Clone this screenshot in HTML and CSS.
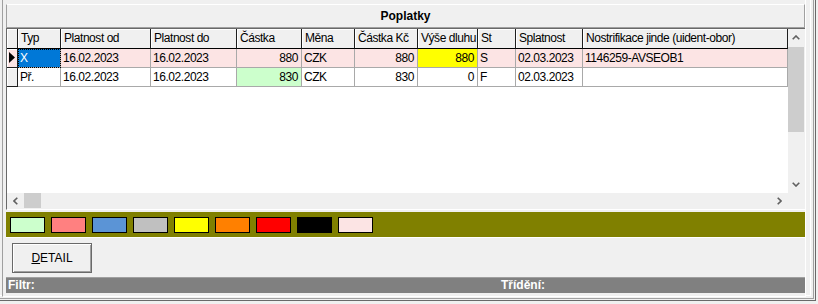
FILE: index.html
```html
<!DOCTYPE html>
<html lang="cs">
<head>
    <meta charset="UTF-8">
    <title>Poplatky</title>
    <link rel="stylesheet" href="styles.css">
</head>
<body>
    <div class="window">
        <div class="panel">
            <div class="title">Poplatky</div>

            <div class="grid">
                <div class="grid-body">
                    <div class="row head">
                        <div class="cell ind"></div>
                        <div class="cell">Typ</div>
                        <div class="cell">Platnost od</div>
                        <div class="cell">Platnost do</div>
                        <div class="cell">Částka</div>
                        <div class="cell">Měna</div>
                        <div class="cell">Částka Kč</div>
                        <div class="cell">Výše dluhu</div>
                        <div class="cell">St</div>
                        <div class="cell">Splatnost</div>
                        <div class="cell">Nostrifikace jinde (uident-obor)</div>
                    </div>
                    <div class="row data current">
                        <div class="cell ind">
                            <svg width="6" height="11" viewBox="0 0 6 11"><polygon points="0,0 6,5.5 0,11" fill="#000"/></svg>
                        </div>
                        <div class="cell sel">X</div>
                        <div class="cell">16.02.2023</div>
                        <div class="cell">16.02.2023</div>
                        <div class="cell num">880</div>
                        <div class="cell">CZK</div>
                        <div class="cell num">880</div>
                        <div class="cell num yellow">880</div>
                        <div class="cell">S</div>
                        <div class="cell">02.03.2023</div>
                        <div class="cell">1146259-AVSEOB1</div>
                    </div>
                    <div class="row data">
                        <div class="cell ind"></div>
                        <div class="cell">Př.</div>
                        <div class="cell">16.02.2023</div>
                        <div class="cell">16.02.2023</div>
                        <div class="cell num green">830</div>
                        <div class="cell">CZK</div>
                        <div class="cell num">830</div>
                        <div class="cell num">0</div>
                        <div class="cell">F</div>
                        <div class="cell">02.03.2023</div>
                        <div class="cell"></div>
                    </div>
                </div>

                <div class="vscroll">
                    <div class="arrow">
                        <svg width="8" height="5" viewBox="0 0 8 5"><path d="M0.7 4.3 L4 1 L7.3 4.3" fill="none" stroke="#606060" stroke-width="1.6"/></svg>
                    </div>
                    <div class="vtrack"><div class="vthumb"></div></div>
                    <div class="arrow">
                        <svg width="8" height="5" viewBox="0 0 8 5"><path d="M0.7 0.7 L4 4 L7.3 0.7" fill="none" stroke="#606060" stroke-width="1.6"/></svg>
                    </div>
                </div>

                <div class="hscroll">
                    <div class="harrow">
                        <svg width="5" height="8" viewBox="0 0 5 8"><path d="M4.3 0.7 L1 4 L4.3 7.3" fill="none" stroke="#606060" stroke-width="1.6"/></svg>
                    </div>
                    <div class="hthumb"></div>
                    <div class="htrack"></div>
                    <div class="harrow">
                        <svg width="5" height="8" viewBox="0 0 5 8"><path d="M0.7 0.7 L4 4 L0.7 7.3" fill="none" stroke="#606060" stroke-width="1.6"/></svg>
                    </div>
                </div>
                <div class="corner"></div>
            </div>

            <div class="legend">
                <span class="swatch c-green"></span>
                <span class="swatch c-salmon"></span>
                <span class="swatch c-blue"></span>
                <span class="swatch c-silver"></span>
                <span class="swatch c-yellow"></span>
                <span class="swatch c-orange"></span>
                <span class="swatch c-red"></span>
                <span class="swatch c-black"></span>
                <span class="swatch c-pink"></span>
            </div>

            <div class="actions">
                <button class="btn" type="button"><u>D</u>ETAIL</button>
            </div>

            <div class="status">
                <span class="status-filtr">Filtr:</span>
                <span>Třídění:</span>
            </div>
        </div>
    </div>
</body>
</html>
```

FILE: styles.css
```css
* {
    box-sizing: border-box;
}

body {
    margin: 0;
    background-color: #f0f0f0;
    font-family: "Liberation Sans", Arial, sans-serif;
    font-size: 12px;
    color: #000;
}

/* vnejsi ramecek okna */
.window {
    width: 816px;
    height: 301px;
    padding-left: 2px;
    box-shadow: inset -1px -1px 0 #696969, inset -2px -2px 0 #f0f0f0,
                inset -3px -3px 0 #a0a0a0, inset -5px -5px 0 #f0f0f0,
                inset -6px -6px 0 #fff;
}

.panel {
    width: 804px;
    height: 297px;
    padding: 4px 0 0 3px;
    background-color: #f0f0f0;
    border-left: 1px solid #a0a0a0;
    border-right: 1px solid #fff;
    border-bottom: 1px solid #fff;
    display: flex;
    flex-direction: column;
}

.title {
    height: 24px;
    border: 1px solid #a0a0a0;
    border-top-color: #fff;
    text-align: center;
    font-weight: bold;
    line-height: 22px;
}

/* tabulka */
.grid {
    height: 182px;
    border-left: 1px solid #696969;
    border-top: 1px solid #696969;
    border-bottom: 1px solid #fff;
    display: grid;
    grid-template-columns: 781px 17px;
    grid-template-rows: 164px 16px;
}

.grid-body {
    background-color: #fff;
    overflow: hidden;
}

.row {
    display: grid;
    grid-template-columns: 11px 43px 90px 86px 65px 53px 63px 60px 38px 67px 205px;
}

.cell {
    white-space: nowrap;
    overflow: hidden;
    padding: 0 2px;
    letter-spacing: -0.45px;
}

.head .cell {
    height: 20px;
    line-height: 19px;
    padding-left: 3px;
    background-color: #f0f0f0;
    border-right: 1px solid #1e1e1e;
    border-bottom: 1px solid #000;
    box-shadow: inset 1px 1px 0 #fff;
}

.data .cell {
    height: 19px;
    line-height: 18px;
    border-right: 1px solid #a9a9a9;
    border-bottom: 1px solid #a9a9a9;
}

.data .ind {
    background-color: #f0f0f0;
    border-right-color: #1e1e1e;
    border-bottom-color: #1e1e1e;
    box-shadow: inset 1px 1px 0 #fff;
    padding: 3px 0 0 2px;
}

.ind svg {
    display: block;
}

.current .cell {
    background-color: #fce4e4;
}

.num {
    text-align: right;
    padding-right: 3px;
}

.data .sel {
    background-color: #0078d7;
    color: #fff;
    outline: 1px dotted #000;
    outline-offset: -1px;
}

.data .yellow {
    background-color: #ff0;
}

.data .green {
    background-color: #ccffcc;
}

/* posuvniky */
.vscroll {
    background-color: #f0f0f0;
    display: flex;
    flex-direction: column;
}

.arrow {
    height: 17px;
    display: flex;
    align-items: center;
    justify-content: center;
    padding-right: 1px;
}

.vtrack {
    flex: 1;
    padding-top: 1px;
}

.vthumb {
    width: 16px;
    height: 85px;
    background-color: #cdcdcd;
}

.hscroll {
    background-color: #f0f0f0;
    display: flex;
}

.harrow {
    width: 17px;
    display: flex;
    align-items: center;
    justify-content: center;
}

.hthumb {
    width: 17px;
    height: 15px;
    background-color: #cdcdcd;
}

.htrack {
    flex: 1;
}

.corner {
    background-color: #f0f0f0;
}

/* barevna legenda */
.legend {
    margin-top: 2px;
    height: 26px;
    background-color: #808000;
    border-bottom: 1px solid #fff;
    padding: 5px 0 0 4px;
    display: flex;
    gap: 6px;
}

.swatch {
    width: 35px;
    height: 16px;
    border: 1px solid #000;
}

.c-green { background-color: #ccffcc; }
.c-salmon { background-color: #ff8080; }
.c-blue { background-color: #5b94d6; }
.c-silver { background-color: #c0c0c0; }
.c-yellow { background-color: #ffff00; }
.c-orange { background-color: #ff8000; }
.c-red { background-color: #ff0000; }
.c-black { background-color: #000; }
.c-pink { background-color: #fce4e4; }

.actions {
    height: 40px;
    border-bottom: 1px solid #a0a0a0;
    padding: 5px 0 0 6px;
}

.btn {
    width: 80px;
    height: 30px;
    padding: 0;
    font-family: "Liberation Sans", Arial, sans-serif;
    font-size: 12px;
    color: #000;
    background-color: #f0f0f0;
    border: 1px solid #696969;
    box-shadow: inset 1px 1px 0 #fff, inset -1px -1px 0 #a0a0a0;
}

.status {
    height: 15px;
    line-height: 15px;
    background-color: #808080;
    color: #fff;
    font-weight: bold;
    padding-left: 2px;
    display: flex;
}

.status-filtr {
    width: 493px;
}
```
